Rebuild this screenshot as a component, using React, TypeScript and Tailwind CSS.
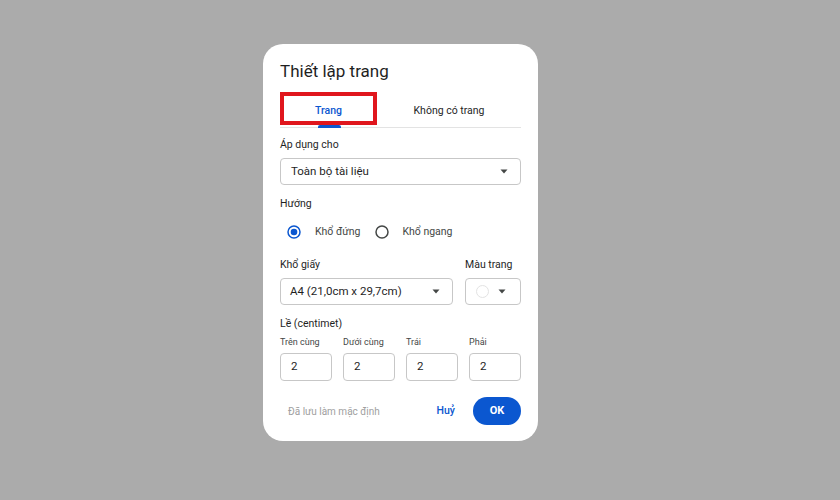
import React from "react";

const Arrow = () => (
  <svg width="8" height="5" viewBox="0 0 8 5" className="shrink-0">
    <path d="M0.5 0.5 L7.5 0.5 L4 4.5 Z" fill="#444746" />
  </svg>
);

const Radio = ({ checked }: { checked?: boolean }) => (
  <svg width="14" height="14" viewBox="0 0 14 14" className="shrink-0">
    <circle cx="7" cy="7" r="6" fill="none" stroke={checked ? "#0b57d0" : "#444746"} strokeWidth="1.5" />
    {checked && <circle cx="7" cy="7" r="3.3" fill="#0b57d0" />}
  </svg>
);

export default function App() {
  const margins = [
    { label: "Trên cùng", value: "2" },
    { label: "Dưới cùng", value: "2" },
    { label: "Trái", value: "2" },
    { label: "Phải", value: "2" },
  ];
  return (
    <div
      className="w-[840px] h-[500px] bg-[#ababab] overflow-hidden"
      style={{ fontFamily: "Roboto, 'Liberation Sans', sans-serif" }}
    >
      <div className="ml-[263px] mt-[44px] w-[275px] h-[397px] bg-white rounded-[20px] px-[17px] pt-[17px] pb-[16px] flex flex-col text-[#1f1f1f]">
        <div className="text-[17px] leading-[20px] text-[#1f1f1f]">Thiết lập trang</div>

        {/* Tabs */}
        <div className="relative mt-[11px] flex h-[36px] border-b border-[#e3e3e3]">
          <div className="relative w-[97px] flex items-center justify-center pt-[2px] text-[10.5px] font-medium text-[#0b57d0]">
            Trang
            <div className="absolute bottom-[-1px] left-[38px] w-[23px] h-[3px] rounded-t-[2px] bg-[#0b57d0]" />
          </div>
          <div className="flex-1 flex items-center justify-center pt-[2px] text-[10.5px] text-[#1f1f1f]">
            Không có trang
          </div>
          <div className="absolute left-0 top-0 w-[97px] h-[33px] border-[4px] border-[#e0161d]" />
        </div>

        <div className="mt-[9px] text-[10.5px] leading-[16px] text-[#1f1f1f]">Áp dụng cho</div>
        <div className="mt-[5px] h-[27px] rounded-[4px] border border-[#c7c7c7] flex items-center pl-[10px] pr-[12px] justify-between">
          <span className="text-[11.5px] text-[#1f1f1f]">Toàn bộ tài liệu</span>
          <Arrow />
        </div>

        <div className="mt-[11px] text-[10.5px] leading-[16px] text-[#1f1f1f]">Hướng</div>
        <div className="mt-[8px] h-[24px] flex items-center pl-[7px]">
          <Radio checked />
          <span className="ml-[14px] text-[10.5px] text-[#444746]">Khổ đứng</span>
          <span className="ml-[15px]"><Radio /></span>
          <span className="ml-[13px] text-[10.5px] text-[#444746]">Khổ ngang</span>
        </div>

        <div className="mt-[13px] flex gap-[12px]">
          <div className="flex-1 flex flex-col">
            <div className="text-[10.5px] leading-[16px]">Khổ giấy</div>
            <div className="mt-[5px] h-[27px] rounded-[4px] border border-[#c7c7c7] flex items-center pl-[9px] pr-[12px] justify-between">
              <span className="text-[11.5px]">A4 (21,0cm x 29,7cm)</span>
              <Arrow />
            </div>
          </div>
          <div className="w-[56px] flex flex-col">
            <div className="text-[10.5px] leading-[16px]">Màu trang</div>
            <div className="mt-[5px] h-[27px] rounded-[4px] border border-[#c7c7c7] flex items-center pl-[10px] pr-[14px] justify-between">
              <span className="w-[13px] h-[13px] rounded-full border border-[#e3e3e3] bg-white" />
              <Arrow />
            </div>
          </div>
        </div>

        <div className="mt-[11px] text-[10.5px] leading-[16px]">Lề (centimet)</div>
        <div className="mt-[4px] grid grid-cols-4 gap-x-[11px]">
          {margins.map((m) => (
            <div key={m.label} className="flex flex-col">
              <div className="text-[9px] leading-[12px] text-[#444746]">{m.label}</div>
              <div className="mt-[5px] h-[28px] rounded-[4px] border border-[#c7c7c7] flex items-center pl-[10px] text-[11.5px]">
                {m.value}
              </div>
            </div>
          ))}
        </div>

        <div className="mt-[16px] flex items-center">
          <span className="ml-[8px] text-[10px] text-[#a0a0a0]">Đã lưu làm mặc định</span>
          <span className="ml-auto text-[10.5px] font-medium text-[#0b57d0]">Huỷ</span>
          <div className="ml-[18px] w-[48px] h-[28px] rounded-full bg-[#0b57d0] flex items-center justify-center text-[11px] font-bold text-white">
            OK
          </div>
        </div>
      </div>
    </div>
  );
}
